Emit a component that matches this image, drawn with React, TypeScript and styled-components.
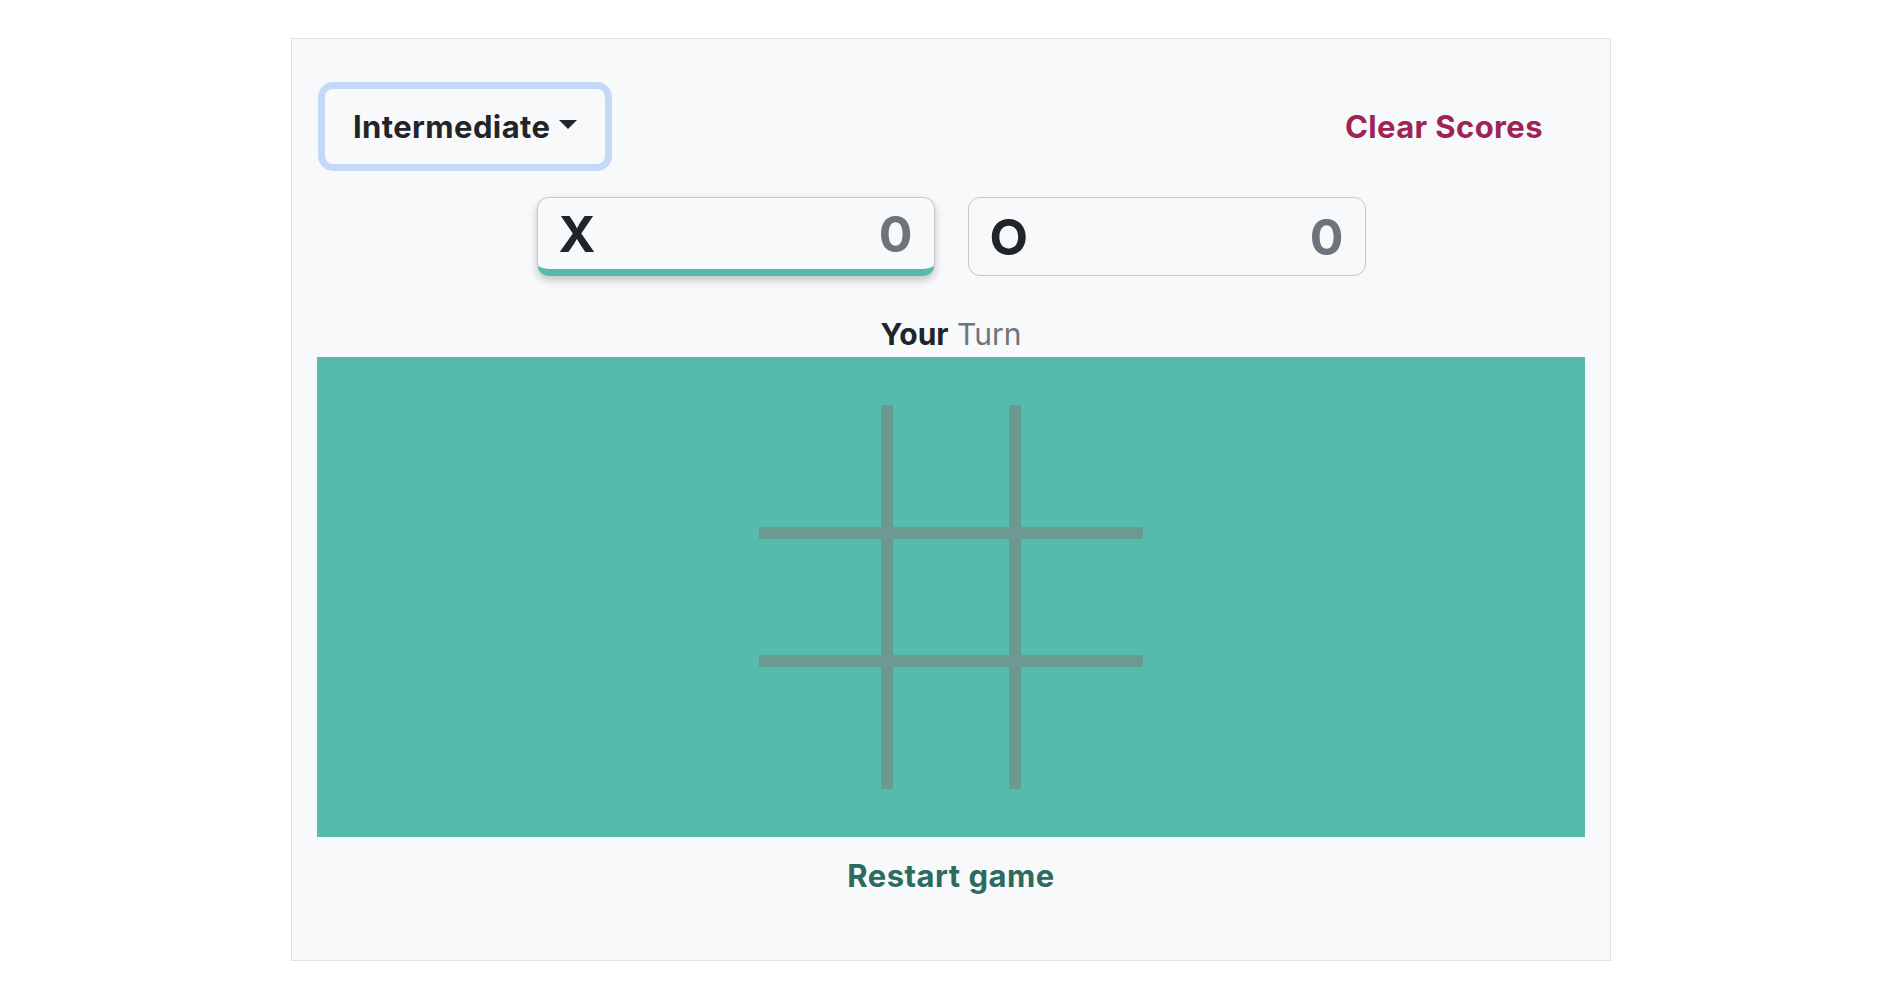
import React from "react";
import styled, { createGlobalStyle } from "styled-components";

const Global = createGlobalStyle`
  html, body {
    margin: 0;
    padding: 0;
    background: #ffffff;
    font-family: Inter, "Noto Sans", "Liberation Sans", sans-serif;
    color: #212529;
  }
  * { box-sizing: border-box; }
`;

const Card = styled.div`
  width: 1320px;
  margin: 38px 0 0 calc(50% - 659px);
  background: #f8f9fa;
  border: 1px solid #dee2e6;
  padding: 50px 25px 66px;
`;

const TopRow = styled.div`
  display: flex;
  align-items: center;
  justify-content: space-between;
`;

const DropdownButton = styled.button`
  display: inline-flex;
  align-items: center;
  height: 75px;
  margin-left: 8px;
  padding: 0 27px;
  border: 1px solid transparent;
  border-radius: 8px;
  background: transparent;
  box-shadow: 0 0 0 7px #c6d8f7;
  font-family: inherit;
  font-size: 31px;
  font-weight: 700;
  letter-spacing: 0.4px;
  color: #212529;
  cursor: pointer;
`;

const Caret = styled.span`
  display: inline-block;
  margin-left: 9px;
  width: 0;
  height: 0;
  border-top: 9px solid #212529;
  border-left: 9px solid transparent;
  border-right: 9px solid transparent;
  transform: translateY(-2px);
`;

const ClearButton = styled.button`
  border: none;
  background: transparent;
  padding: 0 28px;
  margin-right: 14px;
  font-family: inherit;
  font-size: 31px;
  font-weight: 700;
  letter-spacing: 0.4px;
  color: #9f2455;
  cursor: pointer;
`;

const ScoreRow = styled.div`
  display: flex;
  justify-content: center;
  gap: 33px;
  margin-top: 33px;
`;

const ScoreBox = styled.div<{ $active?: boolean }>`
  width: 398px;
  height: 79px;
  display: flex;
  align-items: center;
  justify-content: space-between;
  padding: 0 21px;
  border: 1px solid #c9c6c6;
  border-radius: 12px;
  font-size: 50px;
  font-weight: 700;
  ${(p) =>
    p.$active &&
    `
    border-bottom: 7px solid #56bbad;
    box-shadow: 0 4px 8px rgba(0, 0, 0, 0.22);
  `}
`;

const Player = styled.span`
  color: #212529;
`;

const Score = styled.span`
  color: #6c757d;
`;

const Status = styled.div`
  margin-top: 40px;
  text-align: center;
  font-size: 30px;
  line-height: 36px;
`;

const Strong = styled.span`
  font-weight: 700;
  color: #212529;
`;

const Muted = styled.span`
  color: #6c757d;
`;

const Board = styled.div`
  margin-top: 5px;
  height: 480px;
  background: #56bbad;
  display: flex;
  align-items: center;
  justify-content: center;
`;

const Grid = styled.div`
  display: grid;
  grid-template-columns: repeat(3, 128px);
  grid-template-rows: repeat(3, 128px);
`;

const Cell = styled.div<{ $r: number; $c: number }>`
  border-color: #6c9a92;
  border-style: solid;
  border-top-width: ${(p) => (p.$r > 0 ? 6 : 0)}px;
  border-bottom-width: ${(p) => (p.$r < 2 ? 6 : 0)}px;
  border-left-width: ${(p) => (p.$c > 0 ? 6 : 0)}px;
  border-right-width: ${(p) => (p.$c < 2 ? 6 : 0)}px;
  cursor: pointer;
`;

const Restart = styled.div`
  margin-top: 21px;
  text-align: center;
  font-size: 31px;
  line-height: 36px;
  font-weight: 700;
  letter-spacing: 0.5px;
  color: #2c6b5d;
  cursor: pointer;
`;

export default function App() {
  const cells = [];
  for (let r = 0; r < 3; r++) {
    for (let c = 0; c < 3; c++) {
      cells.push(<Cell key={`${r}-${c}`} $r={r} $c={c} />);
    }
  }
  return (
    <>
      <Global />
      <Card>
        <TopRow>
          <DropdownButton>
            Intermediate
            <Caret />
          </DropdownButton>
          <ClearButton>Clear Scores</ClearButton>
        </TopRow>
        <ScoreRow>
          <ScoreBox $active>
            <Player>X</Player>
            <Score>0</Score>
          </ScoreBox>
          <ScoreBox>
            <Player>O</Player>
            <Score>0</Score>
          </ScoreBox>
        </ScoreRow>
        <Status>
          <Strong>Your</Strong> <Muted>Turn</Muted>
        </Status>
        <Board>
          <Grid>{cells}</Grid>
        </Board>
        <Restart>Restart game</Restart>
      </Card>
    </>
  );
}
